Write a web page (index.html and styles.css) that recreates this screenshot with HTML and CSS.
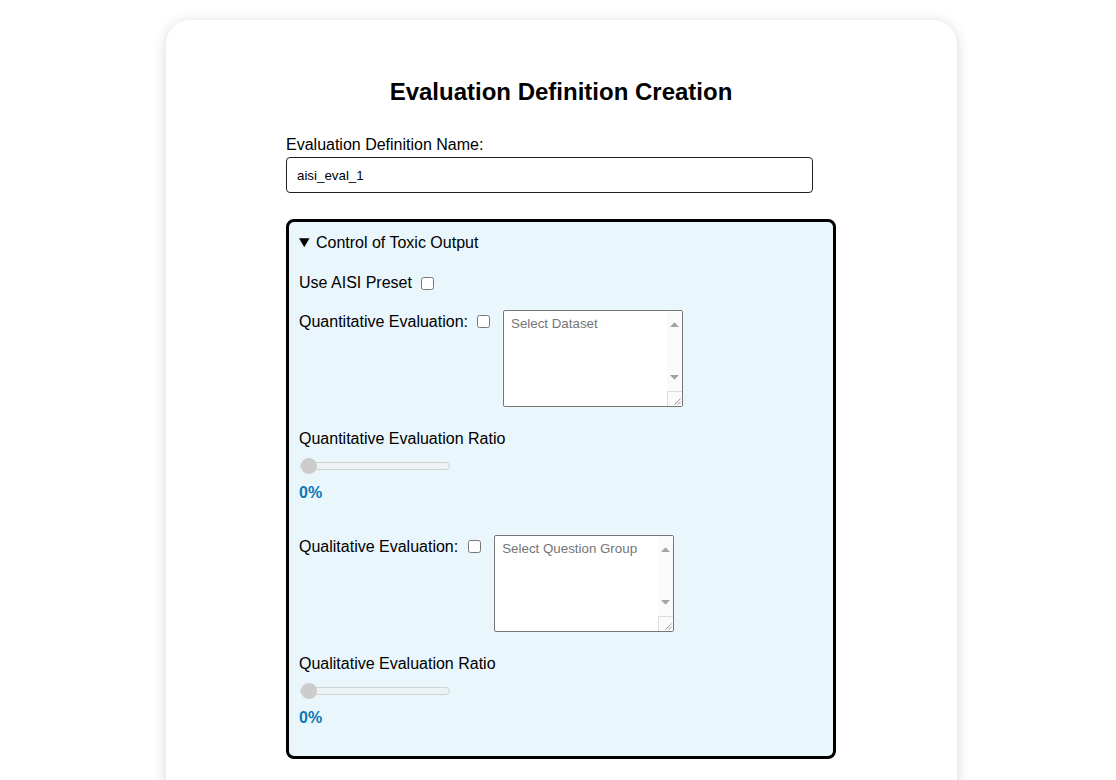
FILE: index.html
```html
<!DOCTYPE html>
<html lang="en">
<head>
<meta charset="utf-8">
<title>Evaluation Definition Creation</title>
<link rel="stylesheet" href="styles.css">
</head>
<body>
<div class="page">
  <div class="card">
    <h1 class="title">Evaluation Definition Creation</h1>
    <form class="form">
      <label class="field-label" for="evalName">Evaluation Definition Name:</label>
      <input class="text-input" id="evalName" type="text" value="aisi_eval_1">

      <details class="section" open>
        <summary class="section-summary">Control of Toxic Output</summary>

        <div class="inline-row preset-row">
          <span class="row-label">Use AISI Preset</span>
          <input class="check" type="checkbox">
        </div>

        <div class="eval-row">
          <span class="row-label eval-label">Quantitative Evaluation:</span>
          <input class="check eval-check" type="checkbox">
          <div class="picker-box">
            <textarea class="picker" placeholder="Select Dataset"></textarea>
            <div class="fake-scroll">
              <svg class="arrow arrow-up" width="15" height="5" viewBox="0 0 15 5"><polygon points="3,5 7.5,0.3 12,5" fill="#a3a3a3"/></svg>
              <div class="scroll-track"></div>
              <svg class="arrow arrow-down" width="15" height="5" viewBox="0 0 15 5"><polygon points="3,0 7.5,4.7 12,0" fill="#a3a3a3"/></svg>
              <svg class="grip" width="15" height="15" viewBox="0 0 15 15"><line x1="13.5" y1="7" x2="7" y2="13.5" stroke="#8a8a8a" stroke-width="1"/><line x1="13.5" y1="10.5" x2="10.5" y2="13.5" stroke="#8a8a8a" stroke-width="1"/></svg>
            </div>
          </div>
        </div>
        <div class="ratio">
          <div class="ratio-label">Quantitative Evaluation Ratio</div>
          <input class="slider" type="range" min="0" max="100" value="0" disabled>
          <div class="ratio-value">0%</div>
        </div>

        <div class="eval-row second">
          <span class="row-label eval-label">Qualitative Evaluation:</span>
          <input class="check eval-check" type="checkbox">
          <div class="picker-box">
            <textarea class="picker" placeholder="Select Question Group"></textarea>
            <div class="fake-scroll">
              <svg class="arrow arrow-up" width="15" height="5" viewBox="0 0 15 5"><polygon points="3,5 7.5,0.3 12,5" fill="#a3a3a3"/></svg>
              <div class="scroll-track"></div>
              <svg class="arrow arrow-down" width="15" height="5" viewBox="0 0 15 5"><polygon points="3,0 7.5,4.7 12,0" fill="#a3a3a3"/></svg>
              <svg class="grip" width="15" height="15" viewBox="0 0 15 15"><line x1="13.5" y1="7" x2="7" y2="13.5" stroke="#8a8a8a" stroke-width="1"/><line x1="13.5" y1="10.5" x2="10.5" y2="13.5" stroke="#8a8a8a" stroke-width="1"/></svg>
            </div>
          </div>
        </div>
        <div class="ratio last">
          <div class="ratio-label">Qualitative Evaluation Ratio</div>
          <input class="slider" type="range" min="0" max="100" value="0" disabled>
          <div class="ratio-value">0%</div>
        </div>
      </details>
    </form>
  </div>
</div>
</body>
</html>
```
FILE: styles.css
```css
html, body {
  margin: 0;
  padding: 0;
  background: #ffffff;
}

body {
  font-family: "Liberation Sans", Arial, sans-serif;
  color: #000;
  overflow: hidden;
}

.page {
  display: flex;
  justify-content: center;
  padding: 20px 0 0 7px;
}

.card {
  width: 791px;
  box-sizing: border-box;
  min-height: 800px;
  background: #fff;
  border-radius: 24px;
  box-shadow: 0 2px 14px rgba(0, 0, 0, 0.16);
  padding: 58px 121px 0 120px;
}

.title {
  margin: 0;
  font-size: 24px;
  line-height: 28px;
  font-weight: bold;
  text-align: center;
}

.form {
  display: flex;
  flex-direction: column;
  align-items: flex-start;
}

.field-label {
  margin-top: 30px;
  font-size: 16px;
  line-height: 18px;
}

.text-input {
  margin: 3px 0 0 0;
  width: 527px;
  height: 36px;
  box-sizing: border-box;
  border: 1px solid #222;
  border-radius: 4px;
  padding: 0 10px;
  font-family: "Liberation Sans", Arial, sans-serif;
  font-size: 13.333px;
  color: #000;
  outline: none;
}

.section {
  margin-top: 26px;
  width: 550px;
  box-sizing: border-box;
  border: 3px solid #000;
  border-radius: 8px;
  background: #e9f6fb;
  padding: 12px 10px 29px 10px;
}

.section-summary {
  font-size: 16px;
  line-height: 18px;
  cursor: pointer;
  margin-bottom: 22px;
}

.row-label {
  font-size: 16px;
  line-height: 18px;
}

.inline-row {
  display: flex;
  align-items: center;
  height: 18px;
}

.check {
  width: 13px;
  height: 13px;
  margin: 0 0 0 9px;
}

.preset-row .check {
  margin-top: 1px;
}

.eval-row {
  display: flex;
  align-items: flex-start;
  margin-top: 18px;
}

.eval-row.second {
  margin-top: 33px;
}

.eval-row.second .eval-check {
  margin-left: 10px;
}

.eval-label {
  padding-top: 3px;
}

.eval-check {
  margin: 5px 0 0 9px;
}

.picker-box {
  margin-left: 13px;
  width: 180px;
  height: 97px;
  box-sizing: border-box;
  border: 1px solid #767676;
  border-radius: 2px;
  background: #fff;
  display: flex;
}

.picker {
  flex: 1;
  min-width: 0;
  margin: 0;
  border: none;
  padding: 5px 7px;
  font-family: "Liberation Sans", Arial, sans-serif;
  font-size: 13.333px;
  line-height: 15px;
  background: transparent;
  resize: none;
  overflow: hidden;
  outline: none;
}

.picker::placeholder {
  color: #757575;
}

.fake-scroll {
  width: 15px;
  flex: none;
  display: flex;
  flex-direction: column;
  background: #fafafa;
}

.arrow {
  display: block;
  flex: none;
}

.arrow-up {
  margin-top: 11px;
}

.scroll-track {
  flex: 1;
}

.arrow-down {
  margin-bottom: 11px;
}

.grip {
  display: block;
  flex: none;
  box-sizing: border-box;
  border-top: 1px solid #dcdcdc;
  border-left: 1px solid #dcdcdc;
  background: #fafafa;
}

.ratio {
  display: flex;
  flex-direction: column;
  align-items: flex-start;
  margin-top: 23px;
}

.ratio-label {
  font-size: 16px;
  line-height: 18px;
}

.slider {
  -webkit-appearance: none;
  appearance: none;
  margin: 10px 0 0 1px;
  width: 150px;
  height: 16px;
  background: transparent;
}

.slider::-webkit-slider-runnable-track {
  height: 8px;
  box-sizing: border-box;
  background: #edf3f5;
  border: 1px solid #cfd3d4;
  border-radius: 4px;
}

.slider::-webkit-slider-thumb {
  -webkit-appearance: none;
  appearance: none;
  width: 16px;
  height: 16px;
  margin-top: -5px;
  border-radius: 50%;
  background: #cccccc;
  border: none;
}

.ratio-value {
  margin-top: 10px;
  font-size: 16px;
  line-height: 18px;
  font-weight: bold;
  color: #0a77b8;
}
```
